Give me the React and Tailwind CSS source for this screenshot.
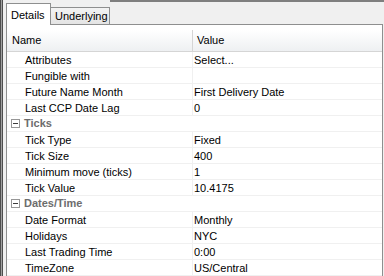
import React from "react";

const sections = [
    {
        title: null,
        rows: [
            ["Attributes", "Select..."],
            ["Fungible with", ""],
            ["Future Name Month", "First Delivery Date"],
            ["Last CCP Date Lag", "0"],
        ],
    },
    {
        title: "Ticks",
        rows: [
            ["Tick Type", "Fixed"],
            ["Tick Size", "400"],
            ["Minimum move (ticks)", "1"],
            ["Tick Value", "10.4175"],
        ],
    },
    {
        title: "Dates/Time",
        rows: [
            ["Date Format", "Monthly"],
            ["Holidays", "NYC"],
            ["Last Trading Time", "0:00"],
            ["TimeZone", "US/Central"],
        ],
    },
];

function MinusBox() {
    return (
        <span className="flex h-[9px] w-[9px] items-center justify-center border border-[#969696] bg-white">
            <span className="h-px w-[5px] bg-[#3c3c3c]" />
        </span>
    );
}

function GroupRow({ title }) {
    return (
        <div className="flex h-[16px] items-center gap-[4px] border-b border-[#f0f0f0] pl-[4px]">
            <MinusBox />
            <span className="font-bold text-[#6d6d6d]">{title}</span>
        </div>
    );
}

function PropRow({ name, value }) {
    return (
        <div className="flex h-[16px] border-b border-[#f0f0f0]">
            <div className="flex w-[186px] shrink-0 items-center border-r border-[#f0f0f0] pt-px pl-[18px]">
                {name}
            </div>
            <div className="flex items-center pt-px pl-[1px]">{value}</div>
        </div>
    );
}

export default function App() {
    return (
        <div className="flex h-[276px] w-[384px] overflow-hidden bg-[#f0f0f0] font-['Liberation_Sans',Arial,sans-serif] text-[11px] leading-none text-black">
            {/* splitter */}
            <div className="w-[3px] shrink-0 border-x border-[#4e4e4e] bg-[#a0a0a0]" />

            <div className="flex min-w-0 flex-1 flex-col">
                {/* tabs */}
                <div className="flex h-[24px] shrink-0 items-end pl-[3px]">
                    <div className="relative z-10 -mb-px flex h-[22px] w-[45px] items-start border-x border-t border-[#8e8f8f] bg-white pl-[4px] pt-[6px]">
                        Details
                    </div>
                    <div className="flex h-[17px] w-[59px] items-center border-r border-t border-[#8e8f8f] bg-linear-to-b from-[#f3f3f3] to-[#e4e4e4] pl-[4px]">
                        Underlying
                    </div>
                    <div className="flex-1 self-stretch border-t-2 border-[#7f7f7f]" />
                </div>

                {/* panel */}
                <div className="mr-px ml-[3px] flex flex-1 flex-col border-x border-t border-[#8e8f8f] bg-white pt-[5px]">
                    <div className="flex h-[22px] shrink-0 border-b border-[#d5d5d5] bg-linear-to-b from-white to-[#eef0f2]">
                        <div className="flex w-[186px] shrink-0 items-center border-r border-[#d5d5d5] pl-[5px]">
                            Name
                        </div>
                        <div className="flex items-center pl-[4px]">Value</div>
                    </div>

                    {sections.map((s, i) => (
                        <div key={i}>
                            {s.title && <GroupRow title={s.title} />}
                            {s.rows.map(([n, v]) => (
                                <PropRow key={n} name={n} value={v} />
                            ))}
                        </div>
                    ))}
                </div>
            </div>
        </div>
    );
}
